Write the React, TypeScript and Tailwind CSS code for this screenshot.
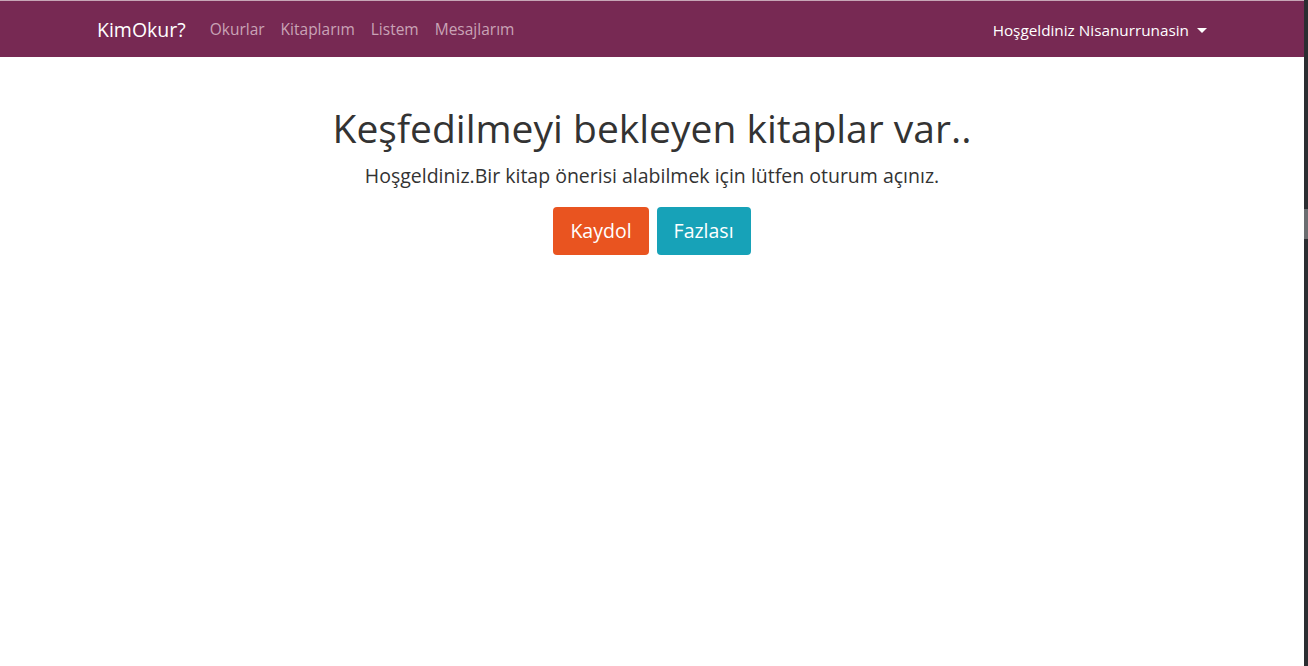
export default function App() {
  const links = ['Okurlar', 'Kitaplarım', 'Listem', 'Mesajlarım']

  return (
    <div className="flex min-h-[666px] w-full bg-white font-['Open_Sans',sans-serif]">
      <div className="flex-1 flex flex-col">
        {/* Navbar */}
        <div className="h-px bg-[#c7a6b6]" />
        <nav className="h-[56px] bg-[#772953]">
          <div className="mx-auto flex h-full max-w-[1140px] items-center px-[15px] pt-[2px]">
            <span className="mr-4 text-[19.5px] text-white">KimOkur?</span>
            <ul className="flex">
              {links.map(l => (
                <li key={l} className="px-2 text-[15.5px] text-[#c9a3b6]">{l}</li>
              ))}
            </ul>
            <div className="ml-auto flex items-center text-[15.3px] text-white">
              Hoşgeldiniz Nisanurrunasin
              <span className="ml-[8px] inline-block h-0 w-0 border-x-[5px] border-t-[5px] border-x-transparent border-t-white" />
            </div>
          </div>
        </nav>

        {/* Hero */}
        <div className="mt-[47px] flex flex-col items-center text-[#333333]">
          <h1 className="text-[39px] leading-[48px]">Keşfedilmeyi bekleyen kitaplar var..</h1>
          <p className="mt-[10px] text-[19.5px] leading-[28px]">
            Hoşgeldiniz.Bir kitap önerisi alabilmek için lütfen oturum açınız.
          </p>
          <div className="mt-[17px] flex gap-[8px]">
            <button className="h-[48px] rounded-[4px] bg-[#e95420] px-[17px] text-[19.5px] text-white">Kaydol</button>
            <button className="h-[48px] rounded-[4px] bg-[#17a2b8] px-[17px] text-[19.5px] text-white">Fazlası</button>
          </div>
        </div>
      </div>

      {/* Scrollbar strip */}
      <div className="flex w-[4px] flex-col bg-[#2b2d31]">
        <div className="h-[209px]" />
        <div className="h-[30px] bg-[#6b6d70]" />
      </div>
    </div>
  )
}
